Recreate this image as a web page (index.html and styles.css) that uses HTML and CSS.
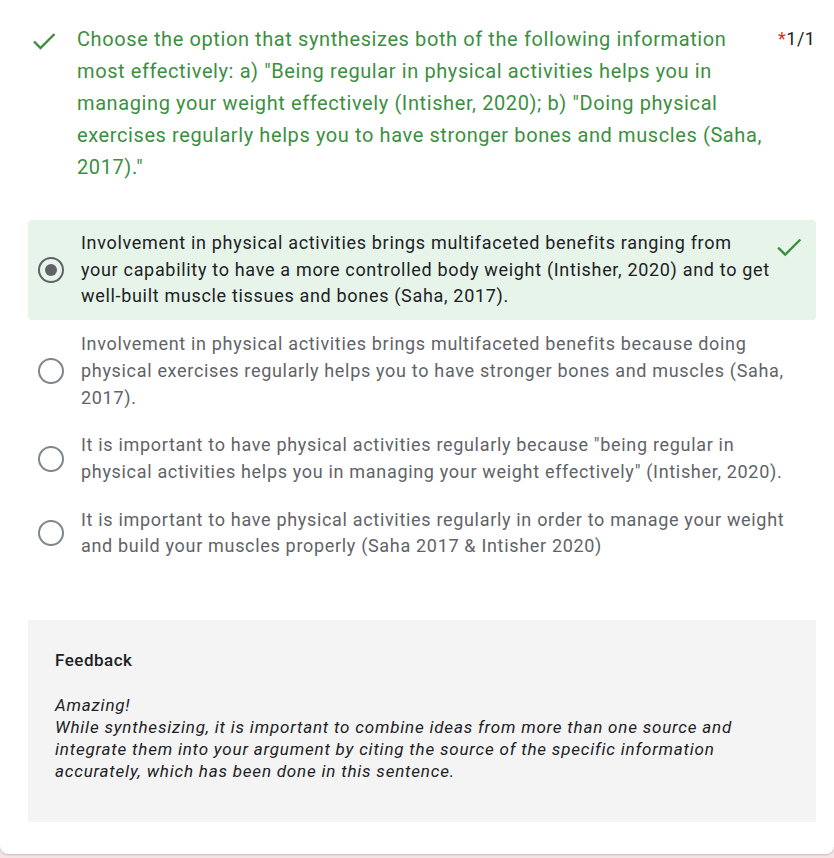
FILE: index.html
```html
<!DOCTYPE html>
<html>
<head>
<meta charset="utf-8">
<link rel="stylesheet" href="styles.css">
</head>
<body>
<div class="card">
  <div class="question">
    <svg class="qcheck" width="24" height="24" viewBox="0 0 24 24"><path d="M2 13.5 L8.5 20 L22.5 6" fill="none" stroke="#3b8f3f" stroke-width="2.4"/></svg>
    <div class="qtitle">Choose the option that synthesizes both of the following information most effectively: a) "Being regular in physical activities helps you in managing your weight effectively (Intisher, 2020); b) "Doing physical exercises regularly helps you to have stronger bones and muscles (Saha, 2017)."</div>
    <div class="points"><span class="star">*</span>1/1</div>
  </div>

  <div class="options">
    <div class="option correct">
      <span class="radio checked"></span>
      <div class="otext">Involvement in physical activities brings multifaceted benefits ranging from your capability to have a more controlled body weight (Intisher, 2020) and to get well-built muscle tissues and bones (Saha, 2017).</div>
      <svg class="ocheck" width="26" height="26" viewBox="0 0 24 24"><path d="M2 13.5 L8.5 20 L22.5 6" fill="none" stroke="#3b8f3f" stroke-width="2.2"/></svg>
    </div>
    <div class="option">
      <span class="radio"></span>
      <div class="otext">Involvement in physical activities brings multifaceted benefits because doing physical exercises regularly helps you to have stronger bones and muscles (Saha, 2017).</div>
    </div>
    <div class="option">
      <span class="radio"></span>
      <div class="otext">It is important to have physical activities regularly because "being regular in physical activities helps you in managing your weight effectively" (Intisher, 2020).</div>
    </div>
    <div class="option">
      <span class="radio"></span>
      <div class="otext">It is important to have physical activities regularly in order to manage your weight and build your muscles properly (Saha 2017 &amp; Intisher 2020)</div>
    </div>
  </div>

  <div class="feedback">
    <div class="fhead">Feedback</div>
    <div class="fbody">Amazing!<br>While synthesizing, it is important to combine ideas from more than one source and integrate them into your argument by citing the source of the specific information accurately, which has been done in this sentence.</div>
  </div>
</div>
</body>
</html>
```
FILE: styles.css
```css
html, body {
  margin: 0;
  padding: 0;
}
body {
  background: #f6e4e6;
  font-family: Roboto, "Liberation Sans", Arial, sans-serif;
  color: #202124;
  height: 858px;
  overflow: hidden;
}
.card {
  background: #ffffff;
  height: 854px;
  box-sizing: border-box;
  border-radius: 0 0 8px 8px;
  box-shadow: 0 1px 2px rgba(60, 64, 67, 0.25);
  padding-top: 23px;
}
.question {
  display: flex;
  align-items: flex-start;
  padding-left: 32px;
}
.qcheck {
  flex: none;
  margin-top: 5px;
}
.qtitle {
  width: 691px;
  margin-left: 21px;
  font-size: 20px;
  line-height: 32px;
  letter-spacing: 0.6px;
  color: #3b8f3f;
}
.points {
  margin-left: 10px;
  font-size: 18px;
  line-height: 32px;
  letter-spacing: 0.5px;
  color: #202124;
}
.star {
  color: #d93025;
}
.options {
  margin-top: 37px;
  padding: 0 18px 0 28px;
  display: flex;
  flex-direction: column;
  gap: 1px;
}
.option {
  display: flex;
  align-items: center;
  padding: 10px 20px 10px 10px;
  border-radius: 4px;
}
.option.correct {
  background: #e6f4ea;
  padding-right: 14px;
}
.radio {
  flex: none;
  box-sizing: border-box;
  width: 26px;
  height: 26px;
  border: 2px solid #80868b;
  border-radius: 50%;
  margin-right: 17px;
  display: flex;
  align-items: center;
  justify-content: center;
}
.radio.checked {
  border-color: #5f6368;
}
.radio.checked::after {
  content: "";
  width: 12px;
  height: 12px;
  border-radius: 50%;
  background: #5f6368;
}
.otext {
  flex: 1;
  font-size: 18px;
  line-height: 26.7px;
  letter-spacing: 0.68px;
  color: #5f6368;
}
.correct .otext {
  color: #202124;
}
.ocheck {
  flex: none;
  align-self: flex-start;
  margin-left: 2px;
  margin-top: 3px;
}
.feedback {
  margin: 50px 18px 0 28px;
  background: #f4f4f4;
  height: 202px;
  box-sizing: border-box;
  padding: 29px 27px 0 27px;
}
.fhead {
  font-size: 17px;
  font-weight: 500;
  line-height: 22px;
  letter-spacing: 0.5px;
  color: #202124;
}
.fbody {
  margin-top: 23px;
  font-size: 17px;
  font-style: italic;
  line-height: 22px;
  letter-spacing: 0.8px;
  color: #202124;
}
```
